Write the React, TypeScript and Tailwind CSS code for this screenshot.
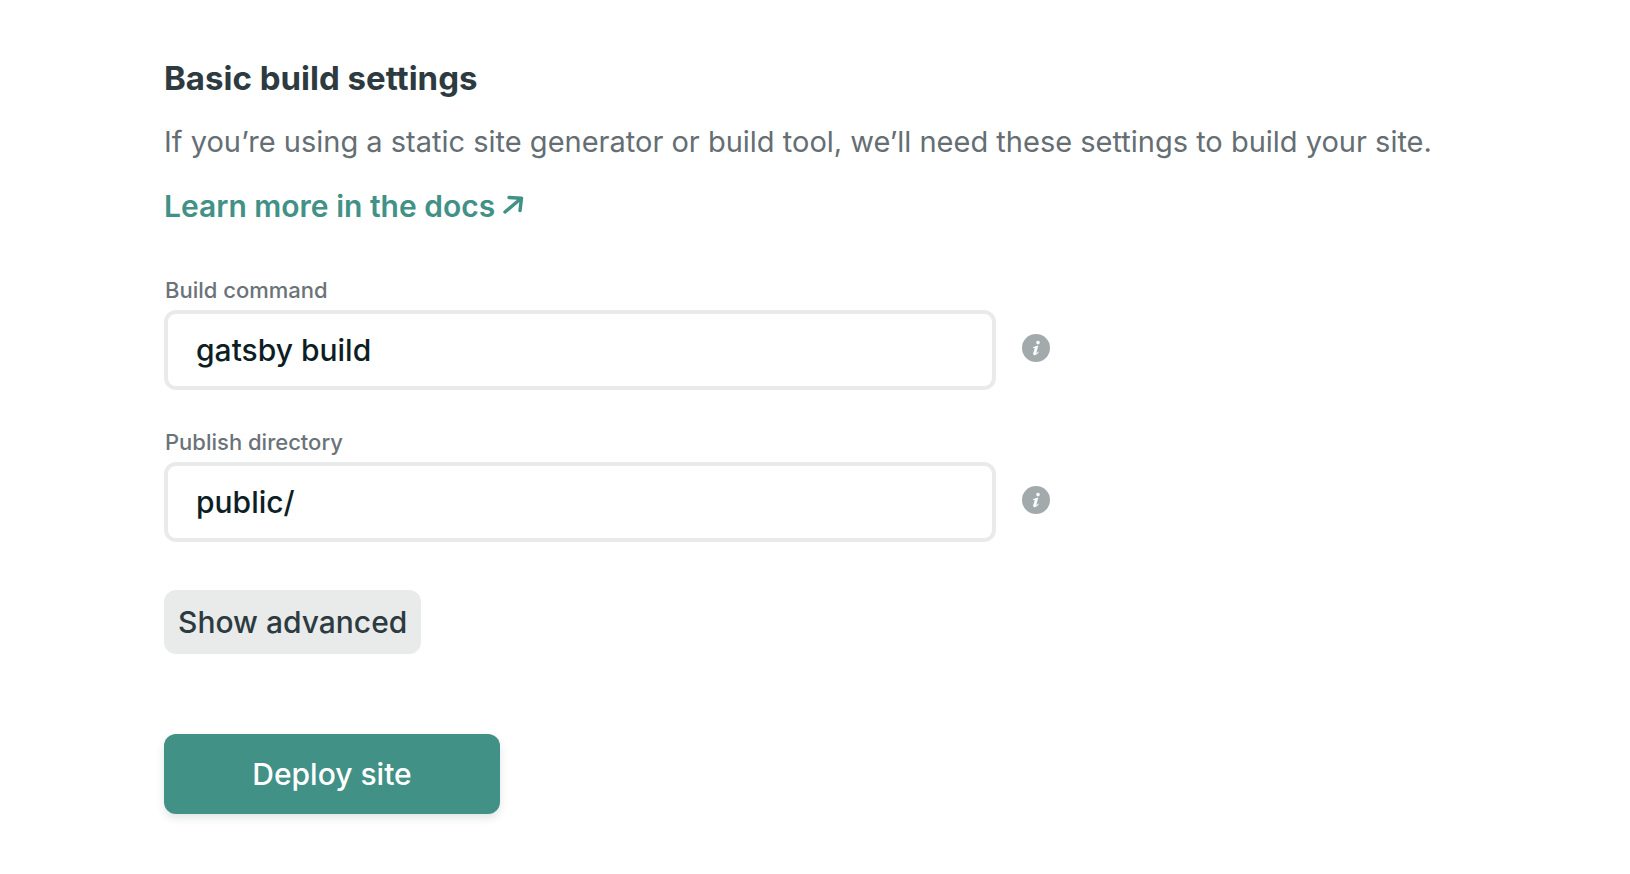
import { useId } from "react";

function InfoIcon() {
  return (
    <svg className="size-7" viewBox="0 0 28 28" aria-hidden="true">
      <circle cx="14" cy="14" r="14" fill="#a3aaac" />
      <circle cx="16" cy="8.6" r="1.8" fill="#fff" />
      <path
        d="M11 13.200C12.900 12.700 14.400 12 16.300 11.600L14.400 18.400C14.100 19.500 14.800 19.200 16.300 17.600L16.800 18.100C15 20.500 13.200 21.400 12.100 21.200C11 21 11 19.900 11.400 18.600L12.700 14.600C12.900 13.900 12.300 13.800 11 14Z"
        fill="#fff"
      />
    </svg>
  );
}

function Field({ label, value }: { label: string; value: string }) {
  const id = useId();
  return (
    <div>
      <label htmlFor={id} className="mb-1 block px-px text-[22px] leading-8 font-medium text-[#6b7378]">
        {label}
      </label>
      <div className="flex items-center gap-[26px]">
        <input
          id={id}
          type="text"
          defaultValue={value}
          className="h-20 w-full max-w-[832px] min-w-0 rounded-xl border-4 border-[#e9ebeb] bg-white px-7 text-[30px] font-medium text-[#0e1e25] outline-none"
        />
        <button type="button" aria-label={`About ${label}`} className="mb-1 shrink-0 rounded-full">
          <InfoIcon />
        </button>
      </div>
    </div>
  );
}

export default function App() {
  return (
    <main className="min-h-screen bg-white px-[164px] pt-[54px] pb-[60px] font-['Inter','Liberation_Sans',sans-serif]">
      <h1 className="text-[33px] leading-12 font-bold text-[#2d3b41]">Basic build settings</h1>
      <p className="mt-4 text-[29px] leading-12 text-[#646e73]">
        If you’re using a static site generator or build tool, we’ll need these settings to build your site.
      </p>
      <a href="#docs" className="mt-4 flex w-fit items-center gap-1.5 text-[30px] leading-12 font-semibold text-[#419187]">
        Learn more in the docs
        <svg className="size-6" viewBox="0 0 24 24" fill="none" stroke="currentColor" strokeWidth="3.4" strokeLinecap="round" strokeLinejoin="round" aria-hidden="true">
          <path d="M4 18L20 4.500M8 3.500L20.500 4.200L19 16.500" />
        </svg>
      </a>
      <form className="mt-11" onSubmit={(e) => e.preventDefault()}>
        <div className="flex flex-col gap-9">
          <Field label="Build command" value="gatsby build" />
          <Field label="Publish directory" value="public/" />
        </div>
        <button type="button" className="mt-12 block h-16 rounded-xl bg-[#e9ebeb] px-3.5 text-[30px] font-medium text-[#2d3b41]">
          Show advanced
        </button>
        <button
          type="submit"
          className="mt-20 block h-20 w-[336px] rounded-xl bg-[#419187] text-[30px] font-medium text-white shadow-[0_4px_8px_rgba(14,30,37,0.12)]"
        >
          Deploy site
        </button>
      </form>
    </main>
  );
}
